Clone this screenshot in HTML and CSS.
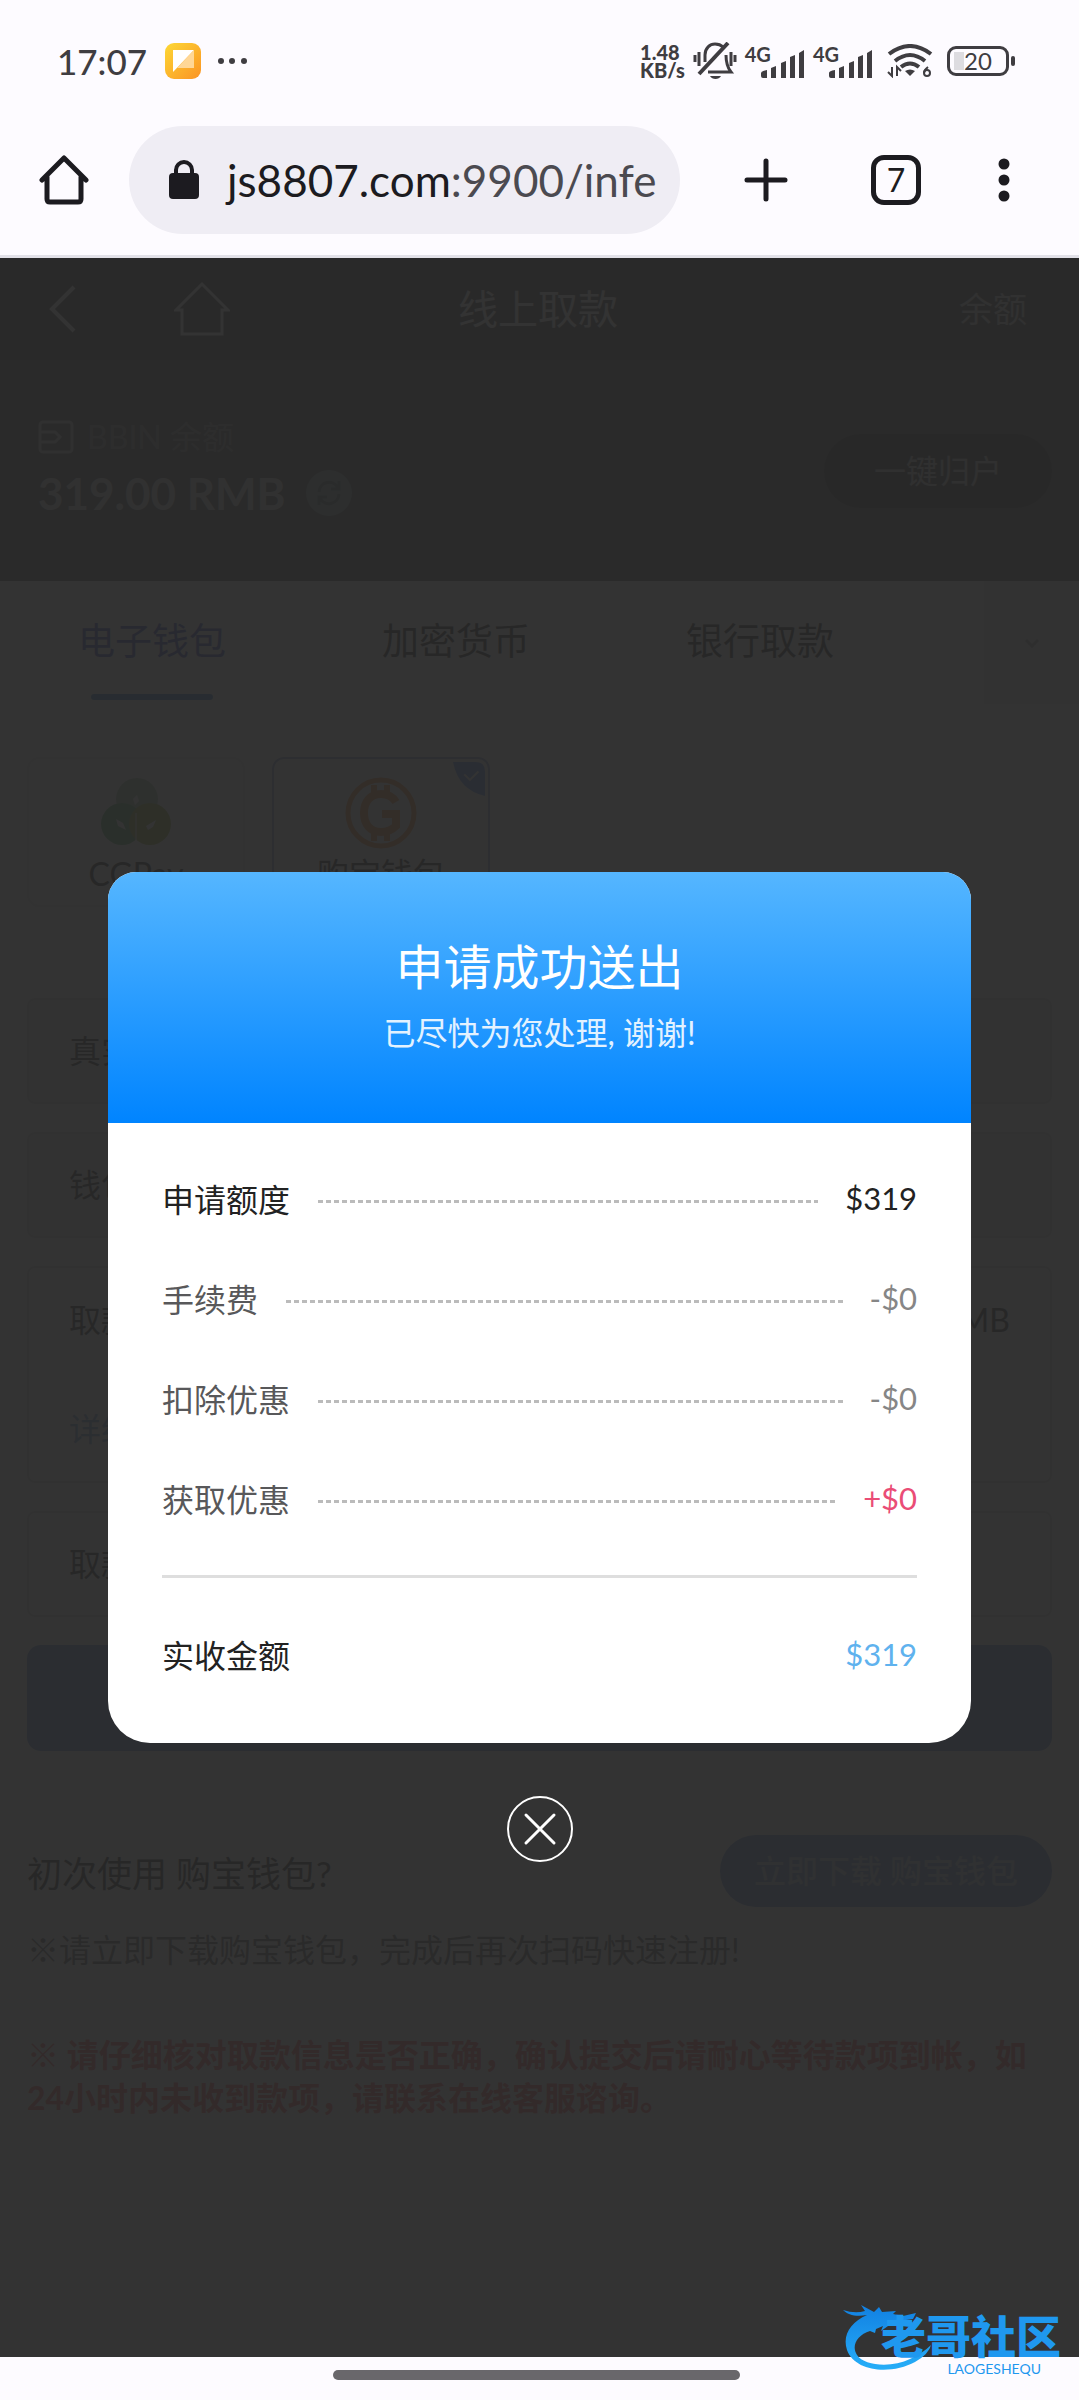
FILE: index.html
```html
<!DOCTYPE html>
<html lang="zh-CN">
<head>
  <meta charset="UTF-8">
  <meta name="viewport" content="width=device-width, initial-scale=1.0">
  <title>线上取款</title>
  <link rel="stylesheet" href="styles.css">
</head>
<body>

  <!-- STATUS BAR -->
  <div class="status-bar">
    <span class="time">17:07</span>
    <svg class="app-icon" width="36" height="36" viewBox="0 0 36 36">
      <defs>
        <linearGradient id="orange" x1="0" y1="0" x2="1" y2="1">
          <stop offset="0" stop-color="#fdd835"/>
          <stop offset="1" stop-color="#fb9324"/>
        </linearGradient>
      </defs>
      <rect width="36" height="36" rx="9" fill="url(#orange)"/>
      <path d="M8 7h21L8 29z" fill="#fff"/>
      <path d="M29 7v18H12z" fill="#ffd796"/>
    </svg>
    <svg width="30" height="8" viewBox="0 0 30 8" fill="#3f3d41">
      <circle cx="4" cy="4" r="3"/><circle cx="15" cy="4" r="3"/><circle cx="27" cy="4" r="3"/>
    </svg>
    <div class="status-right">
      <div class="speed"><span>1.48</span><span>KB/s</span></div>
      <svg width="44" height="38" viewBox="0 0 44 38" fill="none" stroke="#3f3d41" stroke-width="3">
        <path d="M12 20v-7c0-7 5-11 10-11 3 0 6 1 8 3M33 13c0 8 1 12 5 17H15"/>
        <path d="M35 1 6 32" stroke-width="4"/>
        <path d="M2 13v7M6 10v14M38 10v14M42 13v7"/>
        <path d="M17 34h11c-2 4-9 4-11 0z" fill="#3f3d41" stroke="none"/>
      </svg>
      <div class="signal">
        <span>4G</span>
        <svg width="44" height="28" viewBox="0 0 44 28" fill="#3f3d41">
          <path d="M0 23q0-2 6-3v8H2q-2 0-2-2zM10 18l5-2v12h-5zM20 13l5-2v17h-5zM29 7l5-2v23h-5zM38 3l5-3v28h-5z"/>
        </svg>
      </div>
      <div class="signal">
        <span>4G</span>
        <svg width="44" height="28" viewBox="0 0 44 28" fill="#3f3d41">
          <path d="M0 23q0-2 6-3v8H2q-2 0-2-2zM10 18l5-2v12h-5zM20 13l5-2v17h-5zM29 7l5-2v23h-5zM38 3l5-3v28h-5z"/>
        </svg>
      </div>
      <svg class="wifi" width="46" height="34" viewBox="0 0 46 34" fill="none" stroke="#3f3d41" stroke-width="4">
        <path d="M2 10q21-16 42 0M8 17q15-12 30 0M14 23q9-7 18 0"/>
        <path d="M18 27q5-3 10 0l-5 5z" fill="#3f3d41" stroke="none"/>
        <path d="M5 23v9l-4-4M10 32v-9l4 4" stroke-width="2"/>
        <path d="M41 23q-4 3-4 6" stroke-width="2"/>
        <circle cx="40" cy="29" r="3" stroke-width="2"/>
      </svg>
      <div class="battery"><span>20</span></div>
    </div>
  </div>

  <!-- BROWSER BAR -->
  <div class="browser-bar">
    <button class="plain" aria-label="主页">
      <svg width="50" height="50" viewBox="0 0 50 50" fill="none" stroke="#1c1b20" stroke-width="5" stroke-linecap="round" stroke-linejoin="round">
        <path d="M3 25 25 3l22 22M8 22v22q0 3 3 3h28q3 0 3-3V22"/>
      </svg>
    </button>
    <button class="url">
      <svg width="30" height="40" viewBox="0 0 30 40">
        <rect y="13" width="30" height="26" rx="4" fill="#1c1b20"/>
        <path d="M7 14V10a8 8 0 0 1 16 0v4" fill="none" stroke="#1c1b20" stroke-width="4"/>
      </svg>
      <span class="host">js8807.com</span><span class="path">:9900/infe</span>
    </button>
    <button class="plain plus" aria-label="新标签页">
      <svg width="44" height="44" viewBox="0 0 44 44" stroke="#1c1b20" stroke-width="5" stroke-linecap="round">
        <path d="M22 3v38M3 22h38"/>
      </svg>
    </button>
    <button class="tab-count">7</button>
    <button class="plain" aria-label="菜单">
      <svg width="12" height="44" viewBox="0 0 12 44" fill="#1c1b20">
        <circle cx="6" cy="6" r="5.5"/><circle cx="6" cy="22" r="5.5"/><circle cx="6" cy="38" r="5.5"/>
      </svg>
    </button>
  </div>

  <div class="page">
    <header class="top-bar">
      <div class="top-left">
        <a href="#" aria-label="返回">
          <svg width="28" height="48" viewBox="0 0 28 48" fill="none" stroke="#fff" stroke-width="4"><path d="M25 2 3 24l22 22"/></svg>
        </a>
        <a href="#" aria-label="首页">
          <svg width="56" height="56" viewBox="0 0 56 56" fill="none" stroke="#fff" stroke-width="3"><path d="M2 29 28 3l26 26h-6v24H8V29z"/></svg>
        </a>
      </div>
      <h1>线上取款</h1>
      <a class="top-right" href="#">余额</a>
    </header>

    <section class="balance">
      <div>
        <div class="balance-label">
          <svg width="36" height="34" viewBox="0 0 36 34" fill="none" stroke="#eee" stroke-width="3">
            <rect x="2" y="2" width="32" height="30" rx="3"/><path d="M2 12h15l5 5-5 5H2"/>
          </svg>
          <span>BBIN 余额</span>
        </div>
        <div class="balance-amount">
          <strong>319.00 RMB</strong>
          <button class="refresh" aria-label="刷新">
            <svg width="26" height="26" viewBox="0 0 26 26" fill="none" stroke="#cfd6d6" stroke-width="3">
              <path d="M3 12A10 10 0 0 1 22 8M23 14A10 10 0 0 1 4 18M23 1v8h-8M3 25v-8h8"/>
            </svg>
          </button>
        </div>
      </div>
      <button class="collect">一键归户</button>
    </section>

    <nav class="tabs">
      <a class="active" href="#">电子钱包</a>
      <a href="#">加密货币</a>
      <a href="#">银行取款</a>
      <button aria-label="更多">
        <svg width="16" height="10" viewBox="0 0 16 10" fill="none" stroke="#e4e4e4" stroke-width="3"><path d="m2 2 6 6 6-6"/></svg>
      </button>
    </nav>

    <main>
      <div class="wallets">
        <button class="wallet">
          <svg width="72" height="72" viewBox="0 0 72 72">
            <circle cx="37" cy="22" r="21" fill="#e6f0e6"/>
            <circle cx="22" cy="47" r="21" fill="#d2ebd7"/>
            <circle cx="50" cy="47" r="21" fill="#e4ebc8"/>
            <path d="M16 42l7 4 3 7-8-4zM46 49l10-6-3 7-5 3zM37 18l2 6-4 4-2-6z" fill="#fff"/>
            <path d="M36 36v34" stroke="#fff"/>
          </svg>
          <span>CGPay</span>
        </button>
        <button class="wallet selected">
          <svg width="72" height="72" viewBox="0 0 72 72" fill="none" stroke="#ffdfc8">
            <circle cx="36" cy="36" r="33" stroke-width="5"/>
            <path d="M51 25q-5-8-15-8c-11 0-17 8-17 19s6 19 17 19q9 0 15-6V37H37" stroke-width="8"/>
            <path d="M29 8v8M42 8v8M29 56v8M42 56v8" stroke-width="6"/>
          </svg>
          <span>购宝钱包</span>
          <svg class="tick" width="32" height="34" viewBox="0 0 34 36">
            <path d="M0 0h24q10 0 10 10v26Q6 30 0 0z" fill="#d2e1ff"/>
            <path d="m12 13 6 6 9-9" fill="none" stroke="#fff" stroke-width="2"/>
          </svg>
        </button>
      </div>

      <form>
        <div class="field filled">
          <label for="name">真实姓名</label>
          <input type="text" id="name" />
        </div>
        <div class="field filled">
          <label for="wallet">钱包地址</label>
          <input type="text" id="wallet" />
        </div>
        <div class="field amount">
          <div class="amount-row">
            <label for="amount">取款金额</label>
            <input type="text" id="amount" />
            <span>RMB</span>
          </div>
          <a href="#">详细</a>
        </div>
        <div class="field">
          <label for="password">取款密码</label>
          <input type="password" id="password" />
        </div>
        <button class="submit" type="submit" aria-label="提交"></button>
      </form>

      <div class="download">
        <span>初次使用 购宝钱包?</span>
        <a href="#">立即下载 购宝钱包</a>
      </div>
      <p class="hint">※请立即下载购宝钱包，完成后再次扫码快速注册!</p>
      <p class="warning">※ 请仔细核对取款信息是否正确，确认提交后请耐心等待款项到帐，如24小时内未收到款项，请联系在线客服谘询。</p>
    </main>

    <!-- RESULT POPUP -->
    <div class="overlay">
      <div class="dialog" role="dialog" aria-labelledby="dialog-title">
        <div class="dialog-head">
          <h2 id="dialog-title">申请成功送出</h2>
          <p>已尽快为您处理, 谢谢!</p>
        </div>
        <dl class="dialog-body">
          <div class="row dark"><dt>申请额度</dt><dd>$319</dd></div>
          <div class="row"><dt>手续费</dt><dd>-$0</dd></div>
          <div class="row"><dt>扣除优惠</dt><dd>-$0</dd></div>
          <div class="row bonus"><dt>获取优惠</dt><dd>+$0</dd></div>
          <div class="row total"><dt>实收金额</dt><dd>$319</dd></div>
        </dl>
        <button class="close" aria-label="关闭">
          <svg width="66" height="66" viewBox="0 0 66 66" fill="none" stroke="#fff" stroke-linecap="round">
            <circle cx="33" cy="33" r="32" stroke-width="2"/>
            <path d="m19 19 28 28M47 19 19 47" stroke-width="3"/>
          </svg>
        </button>
      </div>
    </div>
  </div>

  <div class="gesture-bar"><span></span></div>

  <!-- WATERMARK -->
  <div class="watermark">
    <svg width="96" height="72" viewBox="0 0 96 72">
      <defs>
        <linearGradient id="dragon" x1="0" y1="0" x2="0" y2="1">
          <stop offset="0" stop-color="#1180e2"/>
          <stop offset="1" stop-color="#27aef8"/>
        </linearGradient>
      </defs>
      <path fill="url(#dragon)" d="M0 6q12 4 22 1l-4-6 13 7 5-5 3 5 14-1-3 3 10 2 13-3-3 6-7 1 7 3-4 4-15-2-6 1-7 5 2-5-7 3-1 4-5-2C14 31 8 42 14 51c7 11 35 13 53 4q13-6 21-14-2 9-16 17C48 71 12 68 4 46-1 31 8 18 24 11 13 13 5 11 0 6z"/>
    </svg>
    <div>
      <b>老哥社区</b>
      <small>LAOGESHEQU</small>
    </div>
  </div>

</body>
</html>
```
FILE: styles.css
```css
* {
  box-sizing: border-box;
}
body {
  margin: 0;
  min-height: 100vh;
  position: relative;
  display: flex;
  flex-direction: column;
  background: #fdfbff;
  font-family: Lato, "Noto Sans CJK SC", sans-serif;
  font-size: 32px;
}
h1, h2, p, dl, dd {
  margin: 0;
  font-weight: 400;
}
a {
  color: inherit;
  text-decoration: none;
}
button {
  font: inherit;
  color: inherit;
  border: none;
  padding: 0;
  background: none;
  cursor: pointer;
}
svg {
  display: block;
  flex: none;
}

/* status bar */
.status-bar {
  display: flex;
  align-items: center;
  height: 122px;
  padding: 0 70px 0 57px;
  color: #3f3d41;
}
.time {
  font-size: 35px;
  font-weight: 500;
}
.app-icon {
  margin: 0 16px 0 18px;
}
.status-right {
  display: flex;
  align-items: center;
  gap: 8px;
  margin-left: auto;
}
.speed {
  display: flex;
  flex-direction: column;
  font-size: 20px;
  line-height: 18px;
  font-weight: 900;
}
.signal {
  display: flex;
  align-items: center;
  height: 34px;
}
.signal span {
  align-self: flex-start;
  font-size: 20px;
  line-height: 20px;
  font-weight: 700;
  margin-right: -10px;
}
.signal svg {
  align-self: flex-end;
}
.wifi {
  margin: 0 6px;
}
.battery {
  position: relative;
  width: 62px;
  height: 30px;
  border: 3px solid #3f3d41;
  border-radius: 9px;
  background: linear-gradient(#dddce0, #dddce0) 4px 3px / 10px 18px no-repeat;
  font-size: 24px;
  line-height: 24px;
  text-align: center;
}
.battery::after {
  content: "";
  position: absolute;
  right: -9px;
  top: 7px;
  width: 4px;
  height: 10px;
  border-radius: 2px;
  background: #3f3d41;
}

/* browser bar */
.browser-bar {
  display: flex;
  align-items: center;
  height: 136px;
  padding: 0 69px 18px 39px;
  border-bottom: 3px solid #e2e1e8;
  color: #1c1b20;
}
.url {
  flex: 1;
  display: flex;
  align-items: center;
  height: 108px;
  margin: 0 64px 0 40px;
  padding: 0 20px 0 40px;
  border-radius: 54px;
  background: #efedf4;
  font-size: 44px;
  white-space: nowrap;
  overflow: hidden;
}
.host {
  margin-left: 28px;
}
.path {
  color: #4b4a50;
}
.tab-count {
  width: 50px;
  height: 50px;
  margin: 0 77px 0 83px;
  border: 5px solid #1c1b20;
  border-radius: 13px;
  font-size: 32px;
  line-height: 38px;
}

/* withdraw page */
.page {
  position: relative;
  flex: 1;
  background: #fff;
  color: #c4c4c4;
}
.top-bar {
  display: grid;
  grid-template-columns: 1fr auto 1fr;
  align-items: center;
  height: 102px;
  padding: 0 52px 4px 49px;
  background: #cdcdcd;
  color: #fff;
}
.top-left {
  display: flex;
  align-items: center;
  gap: 97px;
  padding-top: 4px;
}
h1 {
  font-size: 40px;
}
.top-right {
  font-size: 34px;
  justify-self: end;
  color: #f2f2f2;
}
.balance {
  display: flex;
  align-items: center;
  justify-content: space-between;
  height: 221px;
  padding: 0 27px 0 38px;
  background: #d0d0d0;
}
.balance-label {
  display: flex;
  align-items: center;
  gap: 13px;
  line-height: 44px;
  color: #e2e2e2;
}
.balance-amount {
  display: flex;
  align-items: center;
  gap: 20px;
  font-size: 44px;
  line-height: 68px;
  color: #f5f5f5;
}
.refresh {
  display: grid;
  place-items: center;
  width: 46px;
  height: 46px;
  border-radius: 50%;
  background: #dfe6e6;
}
.collect {
  width: 228px;
  height: 74px;
  padding-bottom: 4px;
  border-radius: 37px;
  background: #c8c8c8;
  color: #efefef;
}
.tabs {
  display: flex;
  height: 123px;
  font-size: 37px;
}
.tabs a {
  flex: 0 0 304px;
  display: flex;
  flex-direction: column;
  align-items: center;
  line-height: 56px;
  padding-top: 32px;
}
.tabs .active {
  color: #c8cdf0;
}
.tabs .active::after {
  content: "";
  width: 122px;
  height: 6px;
  margin-top: 25px;
  border-radius: 3px;
  background: #c8dcf5;
}
.tabs button {
  display: grid;
  place-items: center;
  width: 95px;
  margin-left: auto;
  background: #fafafa;
}
main {
  padding: 53px 27px;
}
.wallets {
  display: flex;
  gap: 27px;
}
.wallet {
  position: relative;
  display: flex;
  flex-direction: column;
  align-items: center;
  gap: 3px;
  width: 218px;
  height: 150px;
  padding-top: 18px;
  border: 2px solid #f8f8f8;
  border-radius: 12px;
  line-height: 44px;
}
.wallet.selected {
  border-color: #dfe6f5;
}
.tick {
  position: absolute;
  top: 3px;
  right: 3px;
}
form {
  display: grid;
  gap: 28px;
  margin-top: 91px;
}
.field {
  display: flex;
  align-items: center;
  height: 106px;
  padding: 0 40px 4px;
  border: 2px solid #f5f5f5;
  border-radius: 8px;
}
.filled {
  background: #fafafa;
}
.field input {
  flex: 1;
  min-width: 0;
  border: none;
  background: none;
  font: inherit;
}
.amount {
  flex-direction: column;
  align-items: stretch;
  gap: 61px;
  height: 217px;
  padding-top: 29px;
  line-height: 46px;
}
.amount-row {
  display: flex;
}
.amount a {
  color: #d7e3f5;
}
.submit {
  height: 106px;
  border-radius: 14px;
  background: #d5e1f5;
}
.download {
  display: flex;
  align-items: center;
  justify-content: space-between;
  margin-top: 84px;
  font-size: 35px;
}
.download a {
  padding: 0 34px;
  border-radius: 36px;
  background: #d5e1f5;
  color: #eef2f8;
  font-size: 32px;
  line-height: 72px;
  font-weight: 500;
}
.hint {
  margin-top: 18px;
  color: #d2d2d2;
}
.warning {
  margin-top: 62px;
  line-height: 43px;
  font-weight: 700;
  color: #ffd0d0;
}

/* popup */
.overlay {
  position: absolute;
  inset: 0;
  display: grid;
  place-items: center;
  background: rgba(0, 0, 0, 0.8);
}
.dialog {
  position: relative;
  width: 80%;
  border-radius: 28px 28px 42px 42px;
  background: #fff;
}
.dialog-head {
  padding: 59px 20px 61px;
  border-radius: 28px 28px 0 0;
  background: linear-gradient(#55b6ff, #0084ff);
  color: #fff;
  text-align: center;
}
.dialog-head h2 {
  font-size: 48px;
  line-height: 72px;
}
.dialog-head p {
  line-height: 59px;
  color: #e3f2ff;
}
.dialog-body {
  padding: 25px 54px 14px;
}
.row {
  display: flex;
  align-items: center;
  height: 100px;
  color: #58585a;
}
.row::before {
  content: "";
  order: 1;
  flex: 1;
  height: 3px;
  margin: 6px 27px 0 28px;
  background: repeating-linear-gradient(90deg, #bbb 0 5px, transparent 5px 8px);
}
.row dd {
  order: 2;
  font-size: 31px;
  color: #868686;
}
.dark, .dark dd {
  color: #222;
}
.bonus dd {
  color: #ea4d76;
}
.total {
  height: 154px;
  margin-top: 27px;
  border-top: 3px solid #dedede;
  color: #222;
}
.total::before {
  background: none;
}
.total dd {
  color: #5fb2ee;
}
.close {
  position: absolute;
  top: calc(100% + 53px);
  left: calc(50% - 33px);
}

.gesture-bar {
  display: flex;
  justify-content: center;
  height: 43px;
  padding: 13px 6px 0 0;
}
.gesture-bar span {
  width: 38%;
  height: 10px;
  border-radius: 5px;
  background: #69676b;
}

.watermark {
  position: absolute;
  right: 18px;
  bottom: 24px;
  display: flex;
  color: #1f98ef;
}
.watermark div {
  display: flex;
  flex-direction: column;
  align-items: flex-end;
  margin: 8px 0 0 -58px;
}
.watermark b {
  font-size: 45px;
  line-height: 50px;
  font-weight: 900;
}
.watermark small {
  font-size: 14px;
  line-height: 14px;
  margin-right: 20px;
}
```
